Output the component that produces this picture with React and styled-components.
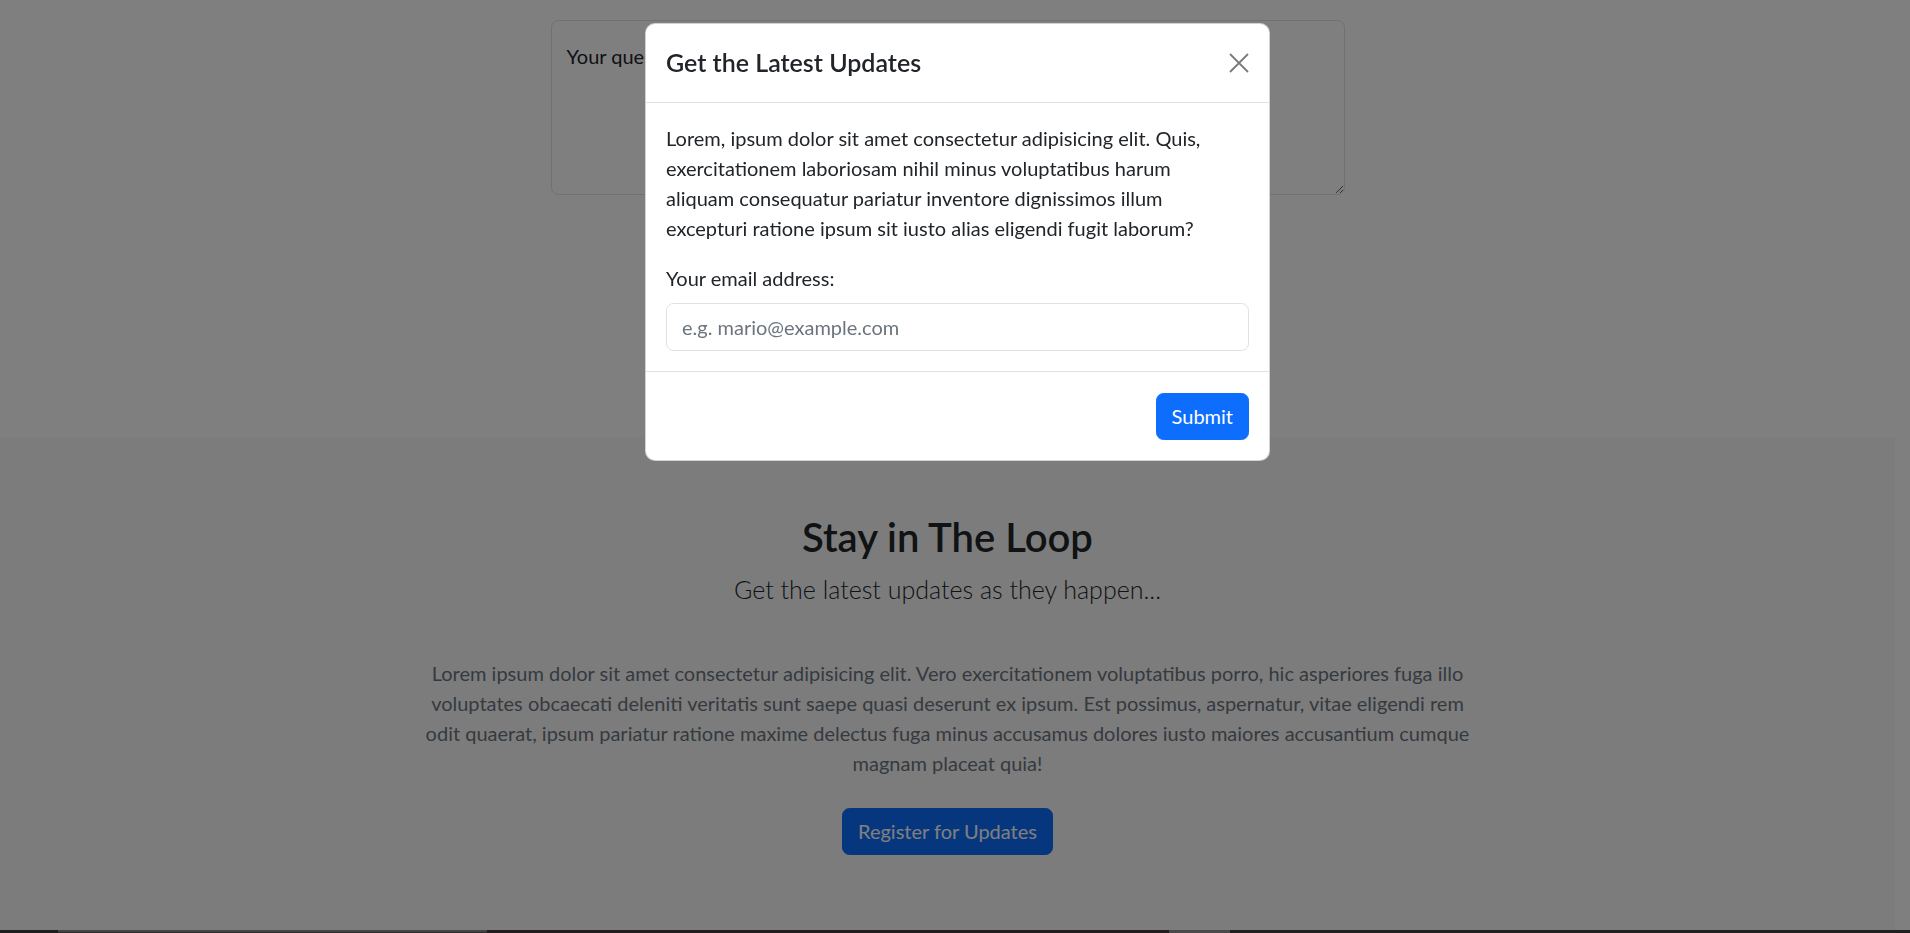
import React from "react";
import styled, { createGlobalStyle } from "styled-components";

const GlobalStyle = createGlobalStyle`
  html, body {
    margin: 0;
    height: 100%;
    overflow: hidden;
  }
  body {
    padding-right: 15px;
    font-family: "Lato", "Liberation Sans", sans-serif;
    font-size: 20px;
    line-height: 1.5;
    color: #212529;
    background-color: #ffffff;
  }
  * {
    box-sizing: border-box;
  }
`;

const TopArea = styled.div`
  height: 437px;
  padding-top: 20px;
  display: flex;
  justify-content: center;
`;

const Question = styled.textarea`
  width: 794px;
  height: 175px;
  padding: 20px 15px;
  font-family: inherit;
  font-size: 20px;
  line-height: 1.5;
  color: #212529;
  border: 1px solid #dee2e6;
  border-radius: 7.5px;
  outline: none;
  &::placeholder {
    color: #212529;
  }
`;

const Loop = styled.section`
  background-color: #f8f9fa;
  padding: 76px 20px 75px;
  text-align: center;
`;

const Heading = styled.h2`
  margin: 0 0 10px;
  font-size: 40px;
  font-weight: 600;
  line-height: 1.2;
`;

const Lead = styled.p`
  margin: 0 0 49px;
  font-size: 25px;
  font-weight: 300;
`;

const Muted = styled.p`
  max-width: 1070px;
  margin: 0 auto 30px;
  color: #6c757d;
`;

const Button = styled.button`
  font-family: inherit;
  font-size: 20px;
  line-height: 1.5;
  padding: 7.5px 15px;
  color: #ffffff;
  background-color: #0d6efd;
  border: 1px solid #0d6efd;
  border-radius: 7.5px;
  cursor: pointer;
`;

const Footer = styled.footer`
  display: flex;
  height: 120px;
  margin-right: -15px;
  background-color: #404040;
`;

const Thumb = styled.div`
  width: ${(p) => p.$w}px;
  background-color: ${(p) => p.$bg};
  border-top: ${(p) => (p.$line ? "2px solid #8a8a8a" : "none")};
`;

const Backdrop = styled.div`
  position: fixed;
  inset: 0;
  background-color: rgba(0, 0, 0, 0.5);
`;

const ModalWrap = styled.div`
  position: fixed;
  inset: 0;
  padding-left: 5px;
`;

const Dialog = styled.div`
  width: 625px;
  margin: 23px auto 0;
  background-color: #ffffff;
  border: 1px solid rgba(0, 0, 0, 0.175);
  border-radius: 10px;
  display: flex;
  flex-direction: column;
`;

const Header = styled.div`
  display: flex;
  align-items: center;
  justify-content: space-between;
  padding: 20px;
  border-bottom: 1px solid #dee2e6;
`;

const Title = styled.h5`
  margin: 0;
  font-size: 25px;
  font-weight: 600;
  line-height: 1.5;
`;

const Close = styled.button`
  width: 20px;
  height: 20px;
  padding: 0;
  border: 0;
  background: transparent;
  color: #7a7a7a;
  cursor: pointer;
  display: flex;
`;

const Body = styled.div`
  padding: 20px;
`;

const Text = styled.p`
  margin: 0 0 20px;
`;

const Label = styled.label`
  display: block;
  margin-bottom: 10px;
`;

const Input = styled.input`
  display: block;
  width: 100%;
  padding: 8px 15px;
  font-family: inherit;
  font-size: 20px;
  line-height: 1.5;
  border: 1px solid #dee2e6;
  border-radius: 7.5px;
  outline: none;
  &::placeholder {
    color: #6c757d;
  }
`;

const ModalFooter = styled.div`
  display: flex;
  justify-content: flex-end;
  padding: 15px;
  border-top: 1px solid #dee2e6;
`;

const SubmitButton = styled(Button)`
  margin: 6px 5px 5px;
`;

const thumbs = [
  { w: 58, bg: "#3c3c3c" },
  { w: 429, bg: "#585858", line: true },
  { w: 682, bg: "#443c40" },
  { w: 61, bg: "#949494" },
  { w: 680, bg: "#404040" },
];

export default function App() {
  return (
    <>
      <GlobalStyle />
      <TopArea>
        <Question placeholder="Your question..." />
      </TopArea>
      <Loop>
        <Heading>Stay in The Loop</Heading>
        <Lead>Get the latest updates as they happen...</Lead>
        <Muted>
          Lorem ipsum dolor sit amet consectetur adipisicing elit. Vero
          exercitationem voluptatibus porro, hic asperiores fuga illo voluptates
          obcaecati deleniti veritatis sunt saepe quasi deserunt ex ipsum. Est
          possimus, aspernatur, vitae eligendi rem odit quaerat, ipsum pariatur
          ratione maxime delectus fuga minus accusamus dolores iusto maiores
          accusantium cumque magnam placeat quia!
        </Muted>
        <Button>Register for Updates</Button>
      </Loop>
      <Footer>
        {thumbs.map((t, i) => (
          <Thumb key={i} $w={t.w} $bg={t.bg} $line={t.line} />
        ))}
      </Footer>
      <Backdrop />
      <ModalWrap>
        <Dialog>
          <Header>
            <Title>Get the Latest Updates</Title>
            <Close aria-label="Close">
              <svg width="20" height="20" viewBox="0 0 20 20">
                <path
                  d="M1 1 L19 19 M19 1 L1 19"
                  stroke="currentColor"
                  strokeWidth="1.8"
                  fill="none"
                />
              </svg>
            </Close>
          </Header>
          <Body>
            <Text>
              Lorem, ipsum dolor sit amet consectetur adipisicing elit. Quis,
              <br />
              exercitationem laboriosam nihil minus voluptatibus harum
              <br />
              aliquam consequatur pariatur inventore dignissimos illum
              <br />
              excepturi ratione ipsum sit iusto alias eligendi fugit laborum?
            </Text>
            <Label htmlFor="email">Your email address:</Label>
            <Input id="email" type="email" placeholder="e.g. mario@example.com" />
          </Body>
          <ModalFooter>
            <SubmitButton>Submit</SubmitButton>
          </ModalFooter>
        </Dialog>
      </ModalWrap>
    </>
  );
}
